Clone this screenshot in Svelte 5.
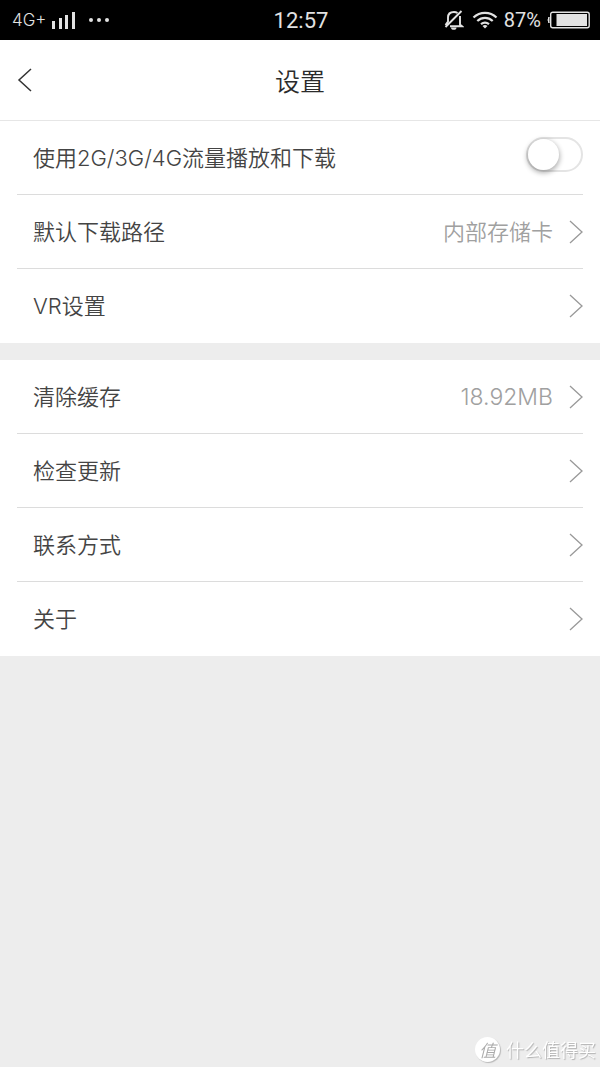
<script>
  let mobileData = $state(false);

  // each group is a white block, separated by the grey page background
  const groups = [
    [
      { id: 'data', label: '使用2G/3G/4G流量播放和下载', type: 'toggle' },
      { id: 'path', label: '默认下载路径', value: '内部存储卡' },
      { id: 'vr', label: 'VR设置' },
    ],
    [
      { id: 'cache', label: '清除缓存', value: '18.92MB', numeric: true },
      { id: 'update', label: '检查更新' },
      { id: 'contact', label: '联系方式' },
      { id: 'about', label: '关于' },
    ],
  ];
</script>

<div class="status">
  <div class="side">
    <span class="net">4G+</span>
    <svg class="signal" width="24" height="18" viewBox="0 0 24 18" fill="currentColor">
      <path d="M0 10h3v8H0zM7 7h3v11H7zM13 4h3v14h-3zM20 1h3v17h-3z" />
    </svg>
    <svg width="22" height="6" viewBox="0 0 22 6" fill="currentColor">
      <circle cx="3" cy="3" r="2" />
      <circle cx="11" cy="3" r="2" />
      <circle cx="19" cy="3" r="2" />
    </svg>
  </div>
  <time>12:57</time>
  <div class="side right">
    <svg width="20" height="20" viewBox="0 0 20 20" fill="none" stroke="currentColor" stroke-width="1.9">
      <path d="M4 12V7.500C4 4 6.500 2 10 2q2 0 3.500 1M16 6v8.500l2 1.700H6M4 11.500l-2.500 3.500M1.500 17L17.500 1" />
      <path d="M7 17.500h5.500a2.700 2.300 0 0 1-5.500 0z" fill="currentColor" stroke="none" />
    </svg>
    <svg class="wifi" width="26" height="18" viewBox="0 0 26 18" fill="none" stroke="currentColor" stroke-width="2.200">
      <path d="M1.500 6.500C8 .2 18 .2 24.500 6.500M5.300 10C9.800 5.800 16.200 5.800 20.700 10M9 13.200c2.500-2.100 5.500-2.100 8 0" />
      <path d="M10.500 15q2.500-1.800 5 0L13 17.500z" fill="currentColor" stroke="none" />
    </svg>
    <span class="percent">87%</span>
    <svg width="43" height="18" viewBox="0 0 43 18" fill="none" stroke="currentColor">
      <path d="M2 6q-2 3 0 6z" fill="currentColor" />
      <rect x="3.700" y="1.200" width="38.500" height="15.600" rx="2" stroke-width="1.400" />
      <path d="M9.500 3H40v12H9.500z" fill="currentColor" stroke="none" />
    </svg>
  </div>
</div>

<header>
  <button class="back" aria-label="返回">
    <svg width="16" height="24" viewBox="0 0 16 24" fill="none" stroke="currentColor" stroke-width="1.500">
      <path d="M14 1L2 12l12 11" />
    </svg>
  </button>
  <h1>设置</h1>
</header>

<main>
  {#each groups as group}
    <div class="group">
      {#each group as item (item.id)}
        {#if item.type === 'toggle'}
          <label class="row">
            <span class="label">{item.label}</span>
            <input class="switch" type="checkbox" role="switch" bind:checked={mobileData} />
          </label>
        {:else}
          <button class="row">
            <span class="label">{item.label}</span>
            {#if item.value}<span class="value" class:numeric={item.numeric}>{item.value}</span>{/if}
            <svg class="arrow" width="14" height="24" viewBox="0 0 14 24" fill="none" stroke="currentColor" stroke-width="1.300">
              <path d="M1 1l12 11L1 23" />
            </svg>
          </button>
        {/if}
      {/each}
    </div>
  {/each}
</main>

<div class="watermark">
  <span class="badge">值</span>
  <span>什么值得买</span>
</div>

<style>
  :global(body) {
    background: #ededed;
    font-family: Inter, 'Noto Sans CJK SC', sans-serif;
    font-weight: 350;
  }
  button {
    font: inherit;
    border: 0;
    background: none;
  }
  svg {
    flex: none;
  }
  .status {
    display: grid;
    grid-template-columns: 1fr auto 1fr;
    align-items: center;
    height: 40px;
    padding: 0 10px 0 12px;
    background: #000;
    color: #e2e2e2;
    font-family: Roboto, sans-serif;
    font-weight: 400;
  }
  .side {
    display: flex;
    align-items: center;
    gap: 6px;
  }
  .right {
    justify-content: flex-end;
  }
  .net {
    font-family: Inter, sans-serif;
    font-size: 17px;
    font-weight: 350;
  }
  .signal {
    margin-right: 6px;
  }
  .wifi {
    margin-left: 2px;
  }
  time {
    font-size: 22px;
  }
  .percent {
    font-size: 20px;
  }
  header {
    display: grid;
    grid-template-columns: 1fr auto 1fr;
    align-items: center;
    height: 80px;
    padding: 0 17px;
    background: #fff;
    border-bottom: 1px solid #e6e6e6;
    color: #2b2b2b;
  }
  .back {
    display: flex;
    justify-self: start;
    padding: 0;
    color: #333;
  }
  h1 {
    margin: 0;
    font-size: 25px;
    font-weight: 350;
  }
  main {
    display: flex;
    flex-direction: column;
    gap: 17px;
  }
  .group {
    padding: 0 17px;
    background: #fff;
  }
  .row {
    display: flex;
    align-items: center;
    gap: 16px;
    box-sizing: border-box;
    width: 100%;
    height: 74px;
    padding: 0 0 0 16px;
    border-bottom: 1px solid #dcdcdc;
    font-size: 22px;
    text-align: left;
  }
  .row:last-child {
    border-bottom-color: transparent;
  }
  .label,
  .value {
    padding-bottom: 3px;
  }
  .label {
    flex: 1;
    color: #444;
  }
  .value {
    color: #a0a0a0;
  }
  .numeric {
    padding: 0;
    font-size: 23px;
  }
  .arrow {
    color: #999;
  }
  .switch {
    appearance: none;
    box-sizing: border-box;
    width: 57px;
    height: 35px;
    margin: 0 0 6px;
    border: 2px solid #e4e4e4;
    border-radius: 18px;
    background: #fff;
  }
  .switch::before {
    content: '';
    display: block;
    width: 31px;
    height: 31px;
    border-radius: 50%;
    background: #fff;
    box-shadow: 0 2px 5px 1px rgba(0, 0, 0, 0.3);
  }
  .switch:checked {
    background: #4cd964;
  }
  .switch:checked::before {
    margin-left: auto;
  }
  .watermark {
    position: fixed;
    right: 4px;
    bottom: 5px;
    display: flex;
    align-items: center;
    gap: 6px;
    color: #fff;
    font-size: 18px;
    text-shadow: 1px 1px 1px #b0b0b0;
  }
  .badge {
    display: grid;
    place-items: center;
    width: 25px;
    height: 25px;
    border-radius: 50%;
    background: #fff;
    box-shadow: 1px 1px 1px #b8b8b8;
    color: #aaa;
    font-size: 17px;
    font-style: italic;
    text-shadow: none;
  }
</style>
